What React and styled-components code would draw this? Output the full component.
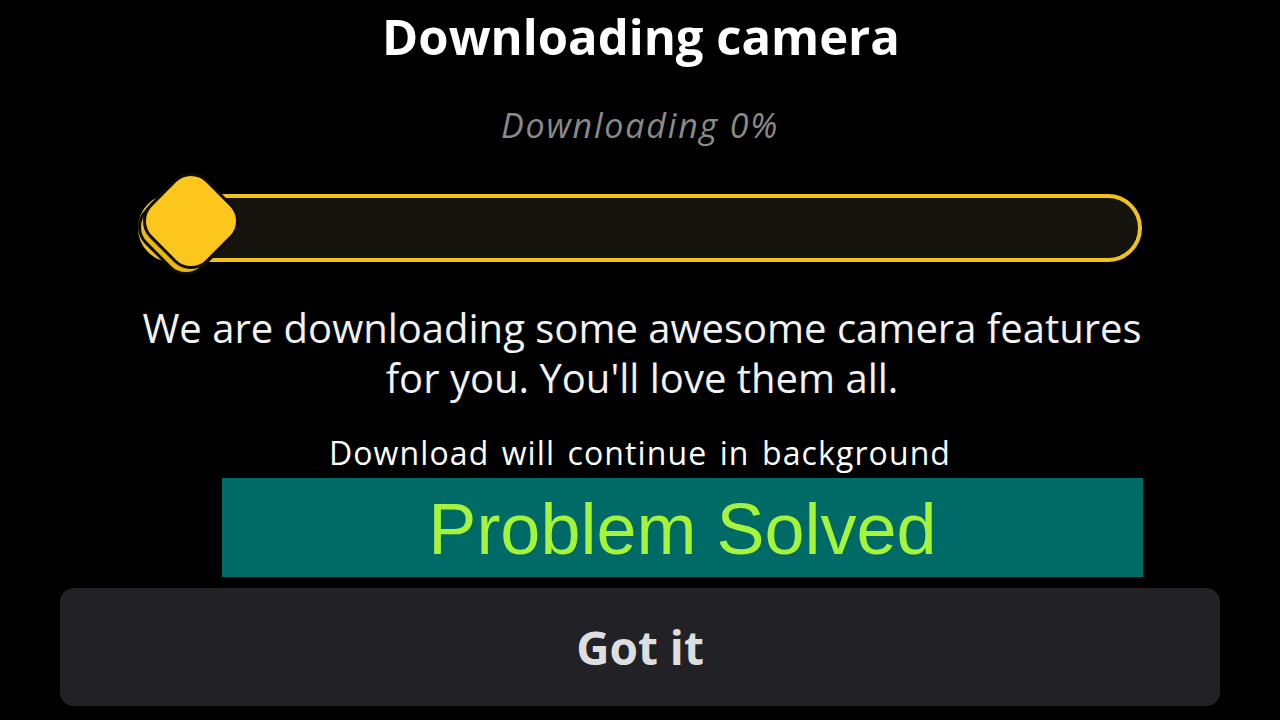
import React from "react";
import styled, { createGlobalStyle } from "styled-components";

const Global = createGlobalStyle`
  html, body { margin: 0; padding: 0; background: #000; }
  body { width: 1280px; height: 720px; overflow: hidden; }
`;

const Page = styled.main`
  width: 1280px;
  height: 720px;
  box-sizing: border-box;
  padding-top: 6px;
  background: #000;
  display: flex;
  flex-direction: column;
  align-items: center;
  font-family: "Open Sans", "Noto Sans", sans-serif;
`;

const Title = styled.h1`
  margin: 0;
  font-size: 49px;
  line-height: 60px;
  font-weight: 700;
  color: #ffffff;
  transform: translateX(1px);
`;

const Status = styled.p`
  margin: 39px 0 0;
  font-size: 34px;
  line-height: 40px;
  letter-spacing: 1.8px;
  font-style: italic;
  color: #8a8a8a;
`;

const Track = styled.div`
  position: relative;
  margin-top: 49px;
  width: 1004px;
  height: 68px;
  box-sizing: border-box;
  border: 4px solid #f0c21c;
  border-radius: 34px;
  background: #15140f;
`;

const Diamond = styled.div`
  position: absolute;
  left: ${(p) => (p.$shadow ? 3 : 8)}px;
  top: ${(p) => (p.$shadow ? -12 : -18)}px;
  width: 82px;
  height: 82px;
  box-sizing: border-box;
  border: 3px solid #0d0d0a;
  border-radius: 24px;
  background: ${(p) => (p.$shadow ? "#e9b718" : "#fcc61d")};
  transform: rotate(45deg);
`;

const Description = styled.p`
  margin: 41px 0 0;
  width: 1040px;
  text-align: center;
  font-size: 40px;
  line-height: 50px;
  color: #f2f2f2;
  transform: translateX(2px);
`;

const Note = styled.p`
  margin: 32px 0 0;
  font-size: 32px;
  line-height: 36px;
  letter-spacing: 1.1px;
  word-spacing: 3px;
  font-weight: 500;
  color: #ffffff;
`;

const Banner = styled.div`
  align-self: flex-start;
  margin: 7px 0 0 222px;
  width: 921px;
  height: 99px;
  box-sizing: border-box;
  padding-top: 3px;
  background: #006a66;
  text-align: center;
  font-family: "Liberation Sans", Arial, sans-serif;
  font-size: 72px;
  line-height: 96px;
  color: #a5f43b;
`;

const GotIt = styled.button`
  margin-top: 11px;
  width: 1160px;
  height: 118px;
  border: none;
  border-radius: 14px;
  background: #222226;
  display: flex;
  align-items: center;
  justify-content: center;
  font-family: "Open Sans", "Noto Sans", sans-serif;
  font-size: 46px;
  font-weight: 700;
  color: #dedede;
  cursor: pointer;
`;

export default function App() {
  const progress = 0;
  return (
    <>
      <Global />
      <Page>
        <Title>Downloading camera</Title>
        <Status>Downloading {progress}%</Status>
        <Track>
          <Diamond $shadow />
          <Diamond />
        </Track>
        <Description>
          We are downloading some awesome camera features
          <br />
          for you. You'll love them all.
        </Description>
        <Note>Download will continue in background</Note>
        <Banner>Problem Solved</Banner>
        <GotIt>Got it</GotIt>
      </Page>
    </>
  );
}
